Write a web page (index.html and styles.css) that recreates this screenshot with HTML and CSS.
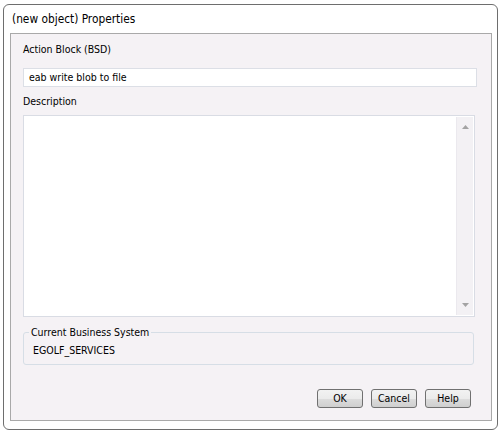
FILE: index.html
```html
<!DOCTYPE html>
<html>
<head>
<meta charset="utf-8">
<link rel="stylesheet" href="styles.css">
</head>
<body>
<div class="window">
  <div class="title">(new object) Properties</div>
  <div class="panel">
    <div class="label">Action Block (BSD)</div>
    <div class="input">eab write blob to file</div>
    <div class="label desc">Description</div>
    <div class="textarea">
      <div class="text-area-body"></div>
      <div class="scrollbar">
        <svg class="arrow" width="7" height="4" viewBox="0 0 7 4"><polygon points="0,4 7,4 3.5,0" fill="#a3a3a3"/></svg>
        <svg class="arrow" width="7" height="4" viewBox="0 0 7 4"><polygon points="0,0 7,0 3.5,4" fill="#a3a3a3"/></svg>
      </div>
    </div>
    <div class="group">
      <span class="legend">Current Business System</span>
      <div class="group-value">EGOLF_SERVICES</div>
    </div>
    <div class="buttons">
      <div class="btn">OK</div>
      <div class="btn">Cancel</div>
      <div class="btn">Help</div>
    </div>
  </div>
</div>
</body>
</html>
```

FILE: styles.css
```css
html, body {
  margin: 0;
  padding: 0;
  background: #ffffff;
}
body {
  font-family: "DejaVu Sans Condensed", "DejaVu Sans", sans-serif;
  font-stretch: condensed;
  color: #000;
}
.window {
  box-sizing: border-box;
  margin: 4px 0 0 3px;
  width: 495px;
  height: 426px;
  border: 1px solid #6e6e6e;
  border-radius: 6px;
  background: #ffffff;
  display: flex;
  flex-direction: column;
}
.title {
  height: 28px;
  line-height: 29px;
  padding-left: 8px;
  font-size: 11.8px;
}
.panel {
  box-sizing: border-box;
  margin: 0 5px 8px 6px;
  flex: 1;
  border: 1px solid #a9a9a9;
  background: #f5f2f5;
  padding: 8px 0 0 12px;
  display: flex;
  flex-direction: column;
  font-size: 10.5px;
}
.label {
  height: 14px;
  line-height: 14px;
}
.input {
  box-sizing: border-box;
  margin-top: 12px;
  width: 454px;
  height: 19px;
  line-height: 17px;
  border: 1px solid #dcdfe6;
  background: #ffffff;
  padding-left: 5px;
}
.desc {
  margin-top: 7px;
}
.textarea {
  box-sizing: border-box;
  margin-top: 7px;
  width: 452px;
  height: 202px;
  border: 1px solid #d9dce4;
  background: #ffffff;
  display: flex;
  padding: 1px;
}
.text-area-body {
  flex: 1;
}
.scrollbar {
  box-sizing: border-box;
  width: 17px;
  background: #f3f1f4;
  border-left: 1px solid #ebe9ee;
  display: flex;
  flex-direction: column;
  justify-content: space-between;
  align-items: center;
  padding: 8px 0 8px 0;
}
.arrow {
  display: block;
}
.group {
  position: relative;
  box-sizing: border-box;
  margin-top: 15px;
  width: 451px;
  height: 33px;
  border: 1px solid #d6dee6;
  border-radius: 3px;
  padding: 10px 0 0 9px;
}
.legend {
  position: absolute;
  left: 5px;
  top: -8px;
  padding: 0 2px;
  line-height: 14px;
  background: #f5f2f5;
}
.group-value {
  line-height: 14px;
}
.buttons {
  margin-top: 24px;
  display: flex;
  justify-content: flex-end;
  gap: 8px;
  padding-right: 20px;
}
.btn {
  box-sizing: border-box;
  width: 46px;
  height: 19px;
  line-height: 17px;
  text-align: center;
  border: 1px solid #707070;
  border-radius: 3px;
  background: linear-gradient(to bottom, #f2f2f2 0%, #ebebeb 50%, #dddddd 51%, #cfcfcf 100%);
}
```
